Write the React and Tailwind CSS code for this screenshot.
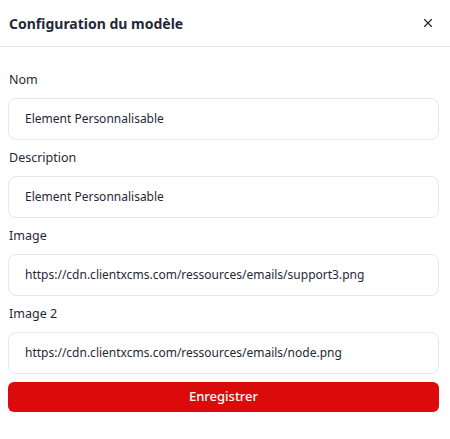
import { X } from "lucide-react";

const fields = [
  { label: "Nom", value: "Element Personnalisable" },
  { label: "Description", value: "Element Personnalisable" },
  { label: "Image", value: "https://cdn.clientxcms.com/ressources/emails/support3.png" },
  { label: "Image 2", value: "https://cdn.clientxcms.com/ressources/emails/node.png" },
];

export default function App() {
  return (
    <div className="w-[450px] h-[439px] bg-white text-[#1f2937]" style={{ fontFamily: '"Noto Sans", sans-serif' }}>
      {/* HEADER */}
      <div className="h-[47px] flex items-center justify-between px-2 border-b border-[#e5e7eb]">
        <h3 className="text-[14px] font-bold text-[#1f2937] pl-px">Configuration du modèle</h3>
        <button className="w-7 h-7 flex items-center justify-center text-[#1f2937]">
          <X size={14} strokeWidth={2} />
        </button>
      </div>

      {/* FORM */}
      <div className="pl-2 pr-[11px] pt-[23px]">
        {fields.map((f) => (
          <div key={f.label} className="mb-2">
            <label className="block text-[12.5px] leading-5 mb-2 pl-px text-[#1f2937]">{f.label}</label>
            <div className="h-[42px] border border-[#e5e7eb] rounded-lg flex items-center px-4 text-[12px] text-[#1f2937]">
              {f.value}
            </div>
          </div>
        ))}
        <button className="w-full h-[30px] rounded-md bg-[#dc0b0b] text-white text-[13px] font-medium">
          Enregistrer
        </button>
      </div>
    </div>
  );
}
